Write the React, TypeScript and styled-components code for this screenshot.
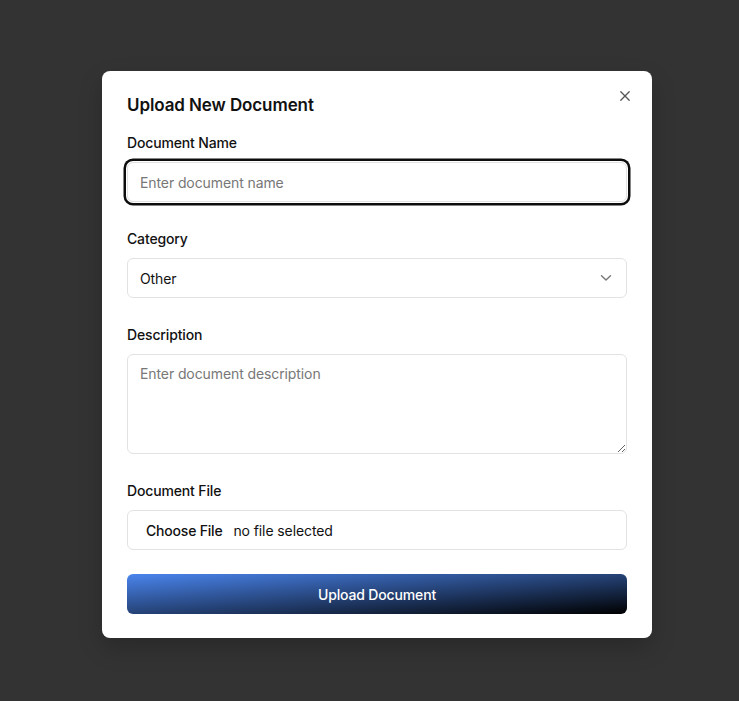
import React from "react";
import styled, { createGlobalStyle } from "styled-components";

const Global = createGlobalStyle`
  html, body { margin: 0; padding: 0; }
  body { font-family: Inter, "Noto Sans", sans-serif; background: #333333; }
  * { box-sizing: border-box; }
`;

const Overlay = styled.div`
  min-height: 701px;
  background: #333333;
  display: flex;
  align-items: flex-start;
  justify-content: flex-start;
  padding: 71px 0 0 102px;
`;

const Modal = styled.div`
  width: 550px;
  background: #ffffff;
  border-radius: 8px;
  padding: 22px 25px 24px;
  display: flex;
  flex-direction: column;
  box-shadow: 0 10px 25px rgba(0, 0, 0, 0.2);
`;

const Header = styled.div`
  display: flex;
  align-items: flex-start;
  justify-content: space-between;
  margin-bottom: 17px;
`;

const Title = styled.h2`
  margin: 0;
  padding-top: 1px;
  font-size: 17px;
  line-height: 22px;
  font-weight: 600;
  color: #111111;
  letter-spacing: -0.1px;
`;

const CloseButton = styled.button`
  border: none;
  background: none;
  padding: 0;
  margin: -4px -5px 0 0;
  width: 14px;
  height: 14px;
  display: flex;
  align-items: center;
  justify-content: center;
  cursor: pointer;
`;

const Group = styled.div<{ $gap?: number }>`
  display: flex;
  flex-direction: column;
  margin-bottom: ${(p) => p.$gap ?? 27}px;
`;

const Label = styled.label`
  font-size: 14px;
  line-height: 20px;
  font-weight: 500;
  color: #111111;
  margin-bottom: 9px;
  letter-spacing: -0.15px;
`;

const fieldBase = `
  width: 100%;
  border: 1px solid #e2e2e2;
  border-radius: 6px;
  background: #ffffff;
  font-family: Inter, "Noto Sans", sans-serif;
  font-size: 14px;
  color: #111111;
  outline: none;
  letter-spacing: -0.1px;
`;

const TextInput = styled.input<{ $focused?: boolean }>`
  ${fieldBase}
  height: 40px;
  padding: 0 12px;
  box-shadow: ${(p) => (p.$focused ? "0 0 0 1px #ffffff, 0 0 0 3.5px #0d0d0d" : "none")};
  &::placeholder { color: #777777; }
  &:focus { outline: none; }
`;

const SelectBox = styled.div`
  ${fieldBase}
  height: 40px;
  padding: 0 14px 0 12px;
  display: flex;
  align-items: center;
  justify-content: space-between;
`;

const SelectValue = styled.span`
  font-size: 14px;
  color: #111111;
`;

const TextArea = styled.textarea`
  ${fieldBase}
  height: 100px;
  padding: 10px 12px;
  resize: vertical;
  display: block;
  &::placeholder { color: #777777; }
`;

const FileBox = styled.div`
  ${fieldBase}
  height: 40px;
  padding: 0 12px 0 18px;
  display: flex;
  align-items: center;
  gap: 11px;
`;

const FileButton = styled.span`
  font-size: 14px;
  font-weight: 500;
  color: #111111;
  letter-spacing: -0.2px;
`;

const FileText = styled.span`
  font-size: 14px;
  color: #111111;
`;

const SubmitButton = styled.button`
  margin-top: -3px;
  height: 40px;
  width: 100%;
  border: none;
  border-radius: 6px;
  background: linear-gradient(to bottom right, #4a85ee, #000000);
  color: #ffffff;
  font-family: Inter, "Noto Sans", sans-serif;
  font-size: 14px;
  font-weight: 500;
  letter-spacing: -0.15px;
  cursor: pointer;
`;

export default function App() {
  return (
    <>
      <Global />
      <Overlay>
        <Modal>
          <Header>
            <Title>Upload New Document</Title>
            <CloseButton aria-label="Close">
              <svg width="12" height="12" viewBox="0 0 12 12" fill="none" stroke="#555" strokeWidth="1.3" strokeLinecap="round">
                <path d="M1.8 1.8 L10.2 10.2 M10.2 1.8 L1.8 10.2" />
              </svg>
            </CloseButton>
          </Header>
          <Group>
            <Label>Document Name</Label>
            <TextInput $focused autoFocus placeholder="Enter document name" />
          </Group>
          <Group>
            <Label>Category</Label>
            <SelectBox>
              <SelectValue>Other</SelectValue>
              <svg width="12" height="8" viewBox="0 0 12 8" fill="none" stroke="#777" strokeWidth="1.4" strokeLinecap="round" strokeLinejoin="round">
                <path d="M1.5 1.8 L6 6 L10.5 1.8" />
              </svg>
            </SelectBox>
          </Group>
          <Group>
            <Label>Description</Label>
            <TextArea placeholder="Enter document description" />
          </Group>
          <Group $gap={27}>
            <Label>Document File</Label>
            <FileBox>
              <FileButton>Choose File</FileButton>
              <FileText>no file selected</FileText>
            </FileBox>
          </Group>
          <SubmitButton>Upload Document</SubmitButton>
        </Modal>
      </Overlay>
    </>
  );
}
